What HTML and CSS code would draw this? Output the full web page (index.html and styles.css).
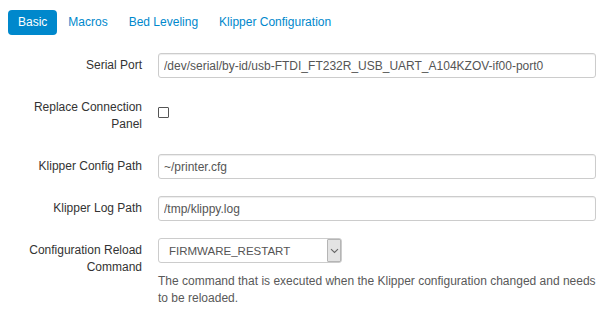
FILE: index.html
```html
<!DOCTYPE html>
<html lang="en">
<head>
  <meta charset="UTF-8">
  <title>Klipper Settings</title>
  <link rel="stylesheet" href="styles.css">
</head>
<body>
  <ul class="nav-pills">
    <li class="active"><a href="#basic">Basic</a></li>
    <li><a href="#macros">Macros</a></li>
    <li><a href="#leveling">Bed Leveling</a></li>
    <li><a href="#config">Klipper Configuration</a></li>
  </ul>

  <form class="form-horizontal">
    <div class="control-group">
      <label class="control-label" for="serial-port">Serial Port</label>
      <div class="controls">
        <input type="text" id="serial-port" class="input-block" value="/dev/serial/by-id/usb-FTDI_FT232R_USB_UART_A104KZOV-if00-port0">
      </div>
    </div>
    <div class="control-group checkbox-group">
      <label class="control-label" for="replace-panel">Replace Connection Panel</label>
      <div class="controls">
        <input type="checkbox" id="replace-panel">
      </div>
    </div>
    <div class="control-group">
      <label class="control-label" for="config-path">Klipper Config Path</label>
      <div class="controls">
        <input type="text" id="config-path" class="input-block" value="~/printer.cfg">
      </div>
    </div>
    <div class="control-group">
      <label class="control-label" for="log-path">Klipper Log Path</label>
      <div class="controls">
        <input type="text" id="log-path" class="input-block" value="/tmp/klippy.log">
      </div>
    </div>
    <div class="control-group">
      <label class="control-label" for="reload-cmd">Configuration Reload Command</label>
      <div class="controls">
        <div class="select-wrap">
          <select id="reload-cmd">
            <option>FIRMWARE_RESTART</option>
            <option>RESTART</option>
          </select>
          <span class="select-arrow">
            <svg width="9" height="6" viewBox="0 0 9 6"><path d="M1 1.2 L4.5 4.5 L8 1.2" fill="none" stroke="#666" stroke-width="1.1"/></svg>
          </span>
        </div>
        <p class="help-block">The command that is executed when the Klipper configuration changed and needs to be reloaded.</p>
      </div>
    </div>
  </form>
</body>
</html>
```

FILE: styles.css
```css
/* base */
body {
  margin: 0;
  font-family: "Liberation Sans", Arial, sans-serif;
  font-size: 12px;
  line-height: 17px;
  color: #333;
  background: #fff;
}

/* tabs */
.nav-pills {
  list-style: none;
  margin: 0;
  padding: 10px 0 0 8px;
  display: flex;
  gap: 1px;
}
.nav-pills a {
  display: block;
  padding: 4px 10px;
  font-size: 12px;
  color: #0088cc;
  text-decoration: none;
  border-radius: 4px;
}
.nav-pills .active a {
  background-color: #0088cc;
  color: #fff;
}

/* form layout */
.form-horizontal {
  margin: 18px 0 0;
  padding: 0 9px 0 0;
}
.control-group {
  display: grid;
  grid-template-columns: 142px 1fr;
  column-gap: 16px;
  margin-bottom: 17px;
}
.control-label {
  text-align: right;
  padding-top: 4px;
  color: #333;
}
.checkbox-group {
  min-height: 42px;
}
.checkbox-group .controls {
  padding-top: 12px;
}

/* inputs */
.input-block {
  display: block;
  box-sizing: border-box;
  width: 438px;
  height: 25px;
  margin: 0;
  padding: 0 5px;
  font-family: inherit;
  font-size: 12px;
  color: #555;
  border: 1px solid #ccc;
  border-radius: 3px;
  box-shadow: inset 0 1px 1px rgba(0, 0, 0, 0.075);
  outline: none;
}
input[type="checkbox"] {
  appearance: none;
  display: block;
  width: 11px;
  height: 11px;
  margin: 0;
  border: 1px solid #555;
  border-radius: 1px;
  background: #fff;
}

/* select */
.select-wrap {
  position: relative;
  width: 184px;
}
.select-wrap select {
  appearance: none;
  display: block;
  box-sizing: border-box;
  width: 184px;
  height: 25px;
  margin: 0;
  padding: 0 20px 0 10px;
  font-family: inherit;
  font-size: 11.5px;
  color: #555;
  background: #fff;
  border: 1px solid #ccc;
  border-radius: 3px;
  outline: none;
}
.select-arrow {
  position: absolute;
  top: 1px;
  right: 1px;
  width: 14px;
  height: 23px;
  box-sizing: border-box;
  display: flex;
  align-items: center;
  justify-content: center;
  background: #e3e3e3;
  border: 1px solid #b5b5b5;
  border-radius: 1px;
  pointer-events: none;
}
.help-block {
  margin: 10px 0 0;
  color: #595959;
}
```
